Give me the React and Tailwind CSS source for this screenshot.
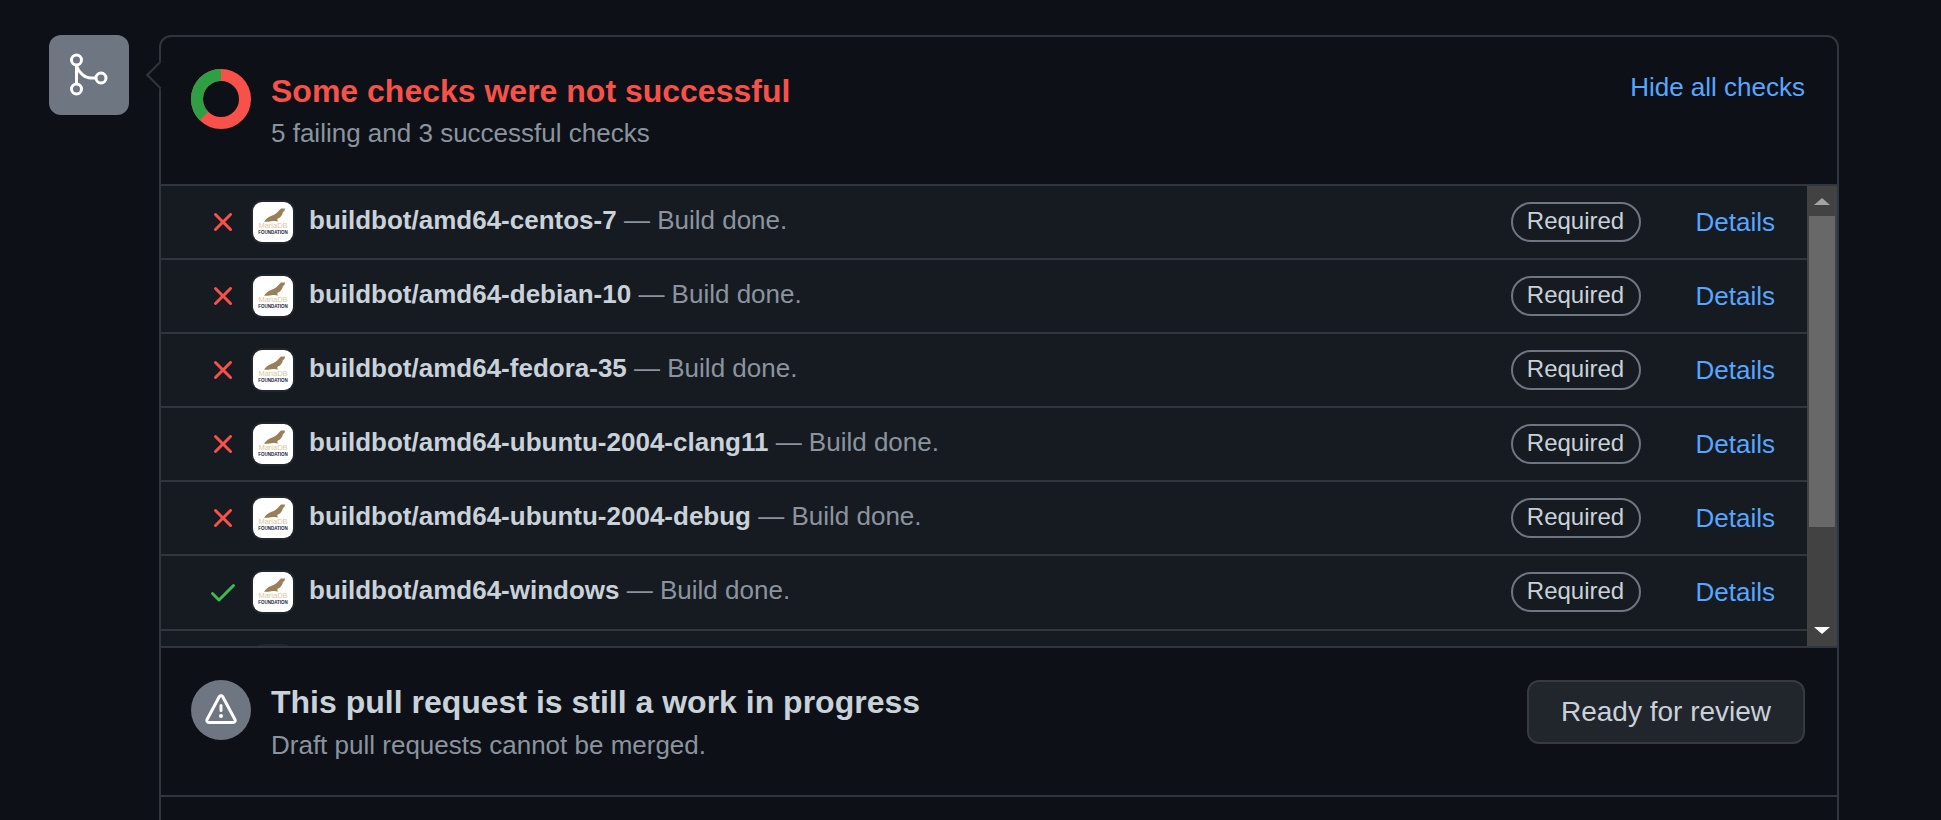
const Octicon = ({ d, className }) => (
  <svg viewBox="0 0 16 16" fill="currentColor" className={className}>
    <path d={d} />
  </svg>
);

const X_PATH =
  "M3.72 3.72a.75.75 0 0 1 1.06 0L8 6.94l3.22-3.22a.749.749 0 0 1 1.275.326.749.749 0 0 1-.215.734L9.06 8l3.22 3.22a.749.749 0 0 1-.326 1.275.749.749 0 0 1-.734-.215L8 9.06l-3.22 3.22a.751.751 0 0 1-1.042-.018.751.751 0 0 1-.018-1.042L6.94 8 3.72 4.78a.75.75 0 0 1 0-1.06Z";
const CHECK_PATH =
  "M13.78 4.22a.75.75 0 0 1 0 1.06l-7.25 7.25a.75.75 0 0 1-1.06 0L2.22 9.28a.751.751 0 0 1 .018-1.042.751.751 0 0 1 1.042-.018L6 10.94l6.72-6.72a.75.75 0 0 1 1.06 0Z";
const ALERT_PATH =
  "M6.457 1.047c.659-1.234 2.427-1.234 3.086 0l6.082 11.378A1.75 1.75 0 0 1 14.082 15H1.918a1.75 1.75 0 0 1-1.543-2.575Zm1.763.707a.25.25 0 0 0-.44 0L1.698 13.132a.25.25 0 0 0 .22.368h12.164a.25.25 0 0 0 .22-.368Zm.53 3.996v2.5a.75.75 0 0 1-1.5 0v-2.5a.75.75 0 0 1 1.5 0ZM9 11a1 1 0 1 1-2 0 1 1 0 0 1 2 0Z";

const checks = [
  { name: "buildbot/amd64-centos-7", ok: false },
  { name: "buildbot/amd64-debian-10", ok: false },
  { name: "buildbot/amd64-fedora-35", ok: false },
  { name: "buildbot/amd64-ubuntu-2004-clang11", ok: false },
  { name: "buildbot/amd64-ubuntu-2004-debug", ok: false },
  { name: "buildbot/amd64-windows", ok: true, last: true },
];

const MergeIcon = () => (
  <svg viewBox="0 0 80 80" fill="none" stroke="currentColor" strokeWidth="3" className="w-20 h-20">
    <circle cx="27.500" cy="25" r="5" />
    <circle cx="27.500" cy="54" r="5" />
    <circle cx="52" cy="43" r="5" />
    <path d="M27.500 30V49" />
    <path d="M27.500 31C30 38 36 43 42 43H47" />
  </svg>
);

const MariaLogo = () => (
  <svg viewBox="0 0 40 40" className="w-10 h-10 block">
    <rect width="40" height="40" rx="9" fill="#fff" />
    <path
      d="M11 19.500C13 17 15 15 18 14C21.500 13 24 11 26 8.500L28 6.500L32 6.500L31.500 9L30 10C29.500 12.500 28 15.500 25 16.500C24 17 24 18.500 25.500 19.500L21 19C18 18.500 15 20.500 11 19.500Z"
      fill="#9a8058"
    />
    <text x="20" y="26" textAnchor="middle" fontSize="7.500" fill="#d9c79e" fontFamily="Liberation Sans, sans-serif">
      MariaDB
    </text>
    <text x="20" y="32" textAnchor="middle" fontSize="4.500" fontWeight="700" fill="#1c2340" fontFamily="Liberation Sans, sans-serif">
      FOUNDATION
    </text>
  </svg>
);

const CheckRow = ({ name, ok, last }) => (
  <div
    className={
      last
        ? "flex items-center shrink-0 h-[75px] pb-[1px] pl-[46px] pr-[32px] border-b-2 border-[#30363d]"
        : "flex items-center shrink-0 h-[74px] pl-[46px] pr-[32px] border-b-2 border-[#30363d]"
    }
  >
    <div className="w-[32px] flex justify-center">
      {ok ? (
        <Octicon d={CHECK_PATH} className="w-8 h-8 text-[#3fb950]" />
      ) : (
        <Octicon d={X_PATH} className="w-8 h-8 text-[#f85149]" />
      )}
    </div>
    <div className="ml-[14px] shrink-0 rounded-[10px] ring-2 ring-[#21262d]">
      <MariaLogo />
    </div>
    <div className="ml-[16px] flex-1 pb-[4px] text-[26px] text-[#8b949e] whitespace-nowrap">
      <span className="font-bold text-[#c9d1d9]">{name}</span> — Build done.
    </div>
    <span className="w-[130px] h-[40px] pb-[2px] flex items-center justify-center rounded-full border-2 border-[#6e7681] text-[24px] text-[#c9d1d9]">
      Required
    </span>
    <a className="ml-[55px] text-[26px] text-[#58a6ff]">Details</a>
  </div>
);

const Scrollbar = () => (
  <div className="w-[30px] shrink-0 bg-[#424242] flex flex-col items-center">
    <div className="h-[30px] flex items-center justify-center">
      <div className="w-0 h-0 border-x-[8px] border-x-transparent border-b-[7px] border-b-[#a3a3a3]" />
    </div>
    <div className="w-[26px] h-[311px] bg-[#686868]" />
    <div className="flex-1 flex items-end justify-center pb-[12px]">
      <div className="w-0 h-0 border-x-[8px] border-x-transparent border-t-[7px] border-t-white" />
    </div>
  </div>
);

export default function App() {
  return (
    <div
      className="h-[820px] overflow-hidden bg-[#0d1117] flex items-start pt-[35px] pl-[49px]"
      style={{ fontFamily: '"Liberation Sans", Arial, sans-serif' }}
    >
      <div className="w-[80px] h-[80px] shrink-0 rounded-[12px] bg-[#6e7681] text-white">
        <MergeIcon />
      </div>

      <div className="relative ml-[30px] w-[1680px] shrink-0 rounded-t-[12px] border-2 border-[#30363d] bg-[#0d1117]">
        <div className="absolute left-[-11px] top-[28px] w-[20px] h-[20px] rotate-45 border-l-2 border-b-2 border-[#30363d] bg-[#0d1117]" />

        <div className="relative flex items-start h-[147px] pt-[32px] pl-[30px] pr-[32px]">
          <svg viewBox="0 0 60 60" className="w-[60px] h-[60px] shrink-0 -rotate-90">
            <circle cx="30" cy="30" r="24" fill="none" stroke="#f85149" strokeWidth="12" />
            <circle cx="30" cy="30" r="24" fill="none" stroke="#2ea043" strokeWidth="12" pathLength="8" strokeDasharray="3 5" strokeDashoffset="3" />
          </svg>
          <div className="ml-[20px] flex-1">
            <h3 className="text-[32px] leading-[44px] font-bold text-[#f85149]">Some checks were not successful</h3>
            <p className="text-[26px] leading-[40px] text-[#8b949e]">5 failing and 3 successful checks</p>
          </div>
          <a className="-mt-[2px] text-[26px] leading-[40px] text-[#58a6ff]">Hide all checks</a>
        </div>

        <div className="flex h-[464px] border-y-2 border-[#30363d] bg-[#161b22]">
          <div className="flex-1 min-w-0 overflow-hidden">
            {checks.map((c) => (
              <CheckRow key={c.name} name={c.name} ok={c.ok} last={c.last} />
            ))}
            {/* next row is scrolled out of view, only the avatar's edge peeks in */}
            <div className="pl-[92px] pt-[15px]">
              <div className="w-10 h-10 rounded-[10px] bg-white ring-2 ring-[#21262d]" />
            </div>
          </div>
          <Scrollbar />
        </div>

        <div className="flex items-start h-[149px] pt-[32px] pl-[30px] pr-[32px] border-b-2 border-[#30363d]">
          <div className="w-[60px] h-[60px] shrink-0 rounded-full bg-[#6e7681] flex items-center justify-center text-white">
            <Octicon d={ALERT_PATH} className="w-8 h-8" />
          </div>
          <div className="ml-[20px] flex-1">
            <h3 className="text-[32px] leading-[44px] font-bold text-[#c9d1d9]">This pull request is still a work in progress</h3>
            <p className="mt-[1px] text-[26px] leading-[40px] text-[#8b949e]">Draft pull requests cannot be merged.</p>
          </div>
          <button className="w-[278px] h-[64px] rounded-[12px] border-2 border-[#363b42] bg-[#21262d] text-[28px] text-[#c9d1d9]">
            Ready for review
          </button>
        </div>
        <div className="h-[200px]" />
      </div>
    </div>
  );
}
